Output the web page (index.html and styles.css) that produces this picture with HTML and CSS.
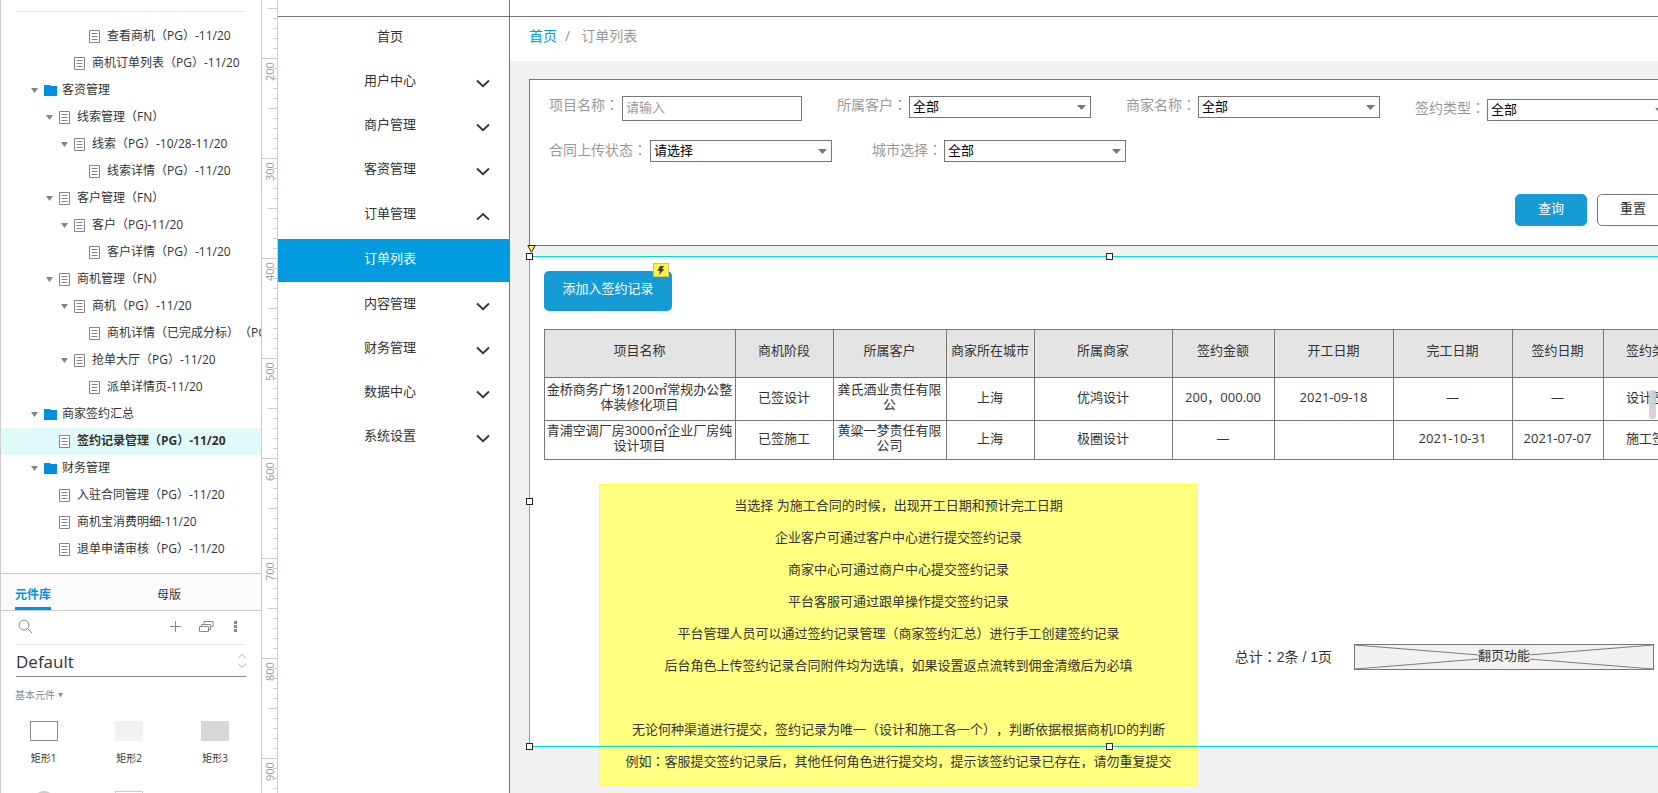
FILE: index.html
```html
<!DOCTYPE html>
<html lang="zh-CN">
<head>
<meta charset="utf-8">
<title>签约记录管理</title>
<link rel="stylesheet" href="styles.css">
</head>
<body>
<svg class="defs" aria-hidden="true">
  <symbol id="page" viewBox="0 0 11 13"><path d="M.5.5h10v12H.5z" fill="#fff" stroke="#858585"/><path d="M2.500 3.500h6M2.500 6.500h6M2.500 9.500h6" stroke="#858585" fill="none"/></symbol>
  <symbol id="folder" viewBox="0 0 13 11"><path d="M0 0h6l1 1h6v10H0z" fill="#008fe0"/></symbol>
  <symbol id="down" viewBox="0 0 14 9"><path d="M1 1.500l6 5.700 6-5.700" fill="none" stroke="#333" stroke-width="1.8"/></symbol>
  <symbol id="up" viewBox="0 0 14 9"><path d="M1 7.700l6-5.700 6 5.700" fill="none" stroke="#333" stroke-width="1.8"/></symbol>
</svg>
<div class="app">
  <aside class="side">
    <div class="side-head"></div>
    <ul class="tree">
      <li class="d3"><i></i><svg class="pg"><use href="#page"/></svg><span>查看商机（PG）-11/20</span></li>
      <li class="d2"><i></i><svg class="pg"><use href="#page"/></svg><span>商机订单列表（PG）-11/20</span></li>
      <li class="d0"><i class="open"></i><svg class="fd"><use href="#folder"/></svg><span>客资管理</span></li>
      <li class="d1"><i class="open"></i><svg class="pg"><use href="#page"/></svg><span>线索管理（FN）</span></li>
      <li class="d2"><i class="open"></i><svg class="pg"><use href="#page"/></svg><span>线索（PG）-10/28-11/20</span></li>
      <li class="d3"><i></i><svg class="pg"><use href="#page"/></svg><span>线索详情（PG）-11/20</span></li>
      <li class="d1"><i class="open"></i><svg class="pg"><use href="#page"/></svg><span>客户管理（FN）</span></li>
      <li class="d2"><i class="open"></i><svg class="pg"><use href="#page"/></svg><span>客户（PG)-11/20</span></li>
      <li class="d3"><i></i><svg class="pg"><use href="#page"/></svg><span>客户详情（PG）-11/20</span></li>
      <li class="d1"><i class="open"></i><svg class="pg"><use href="#page"/></svg><span>商机管理（FN）</span></li>
      <li class="d2"><i class="open"></i><svg class="pg"><use href="#page"/></svg><span>商机（PG）-11/20</span></li>
      <li class="d3"><i></i><svg class="pg"><use href="#page"/></svg><span>商机详情（已完成分标）（PG）</span></li>
      <li class="d2"><i class="open"></i><svg class="pg"><use href="#page"/></svg><span>抢单大厅（PG）-11/20</span></li>
      <li class="d3"><i></i><svg class="pg"><use href="#page"/></svg><span>派单详情页-11/20</span></li>
      <li class="d0"><i class="open"></i><svg class="fd"><use href="#folder"/></svg><span>商家签约汇总</span></li>
      <li class="d1 current"><i></i><svg class="pg"><use href="#page"/></svg><span>签约记录管理（PG）-11/20</span></li>
      <li class="d0"><i class="open"></i><svg class="fd"><use href="#folder"/></svg><span>财务管理</span></li>
      <li class="d1"><i></i><svg class="pg"><use href="#page"/></svg><span>入驻合同管理（PG）-11/20</span></li>
      <li class="d1"><i></i><svg class="pg"><use href="#page"/></svg><span>商机宝消费明细-11/20</span></li>
      <li class="d1"><i></i><svg class="pg"><use href="#page"/></svg><span>退单申请审核（PG）-11/20</span></li>
    </ul>
    <div class="tabs">
      <button class="tab on" type="button">元件库</button>
      <button class="tab" type="button">母版</button>
    </div>
    <div class="tools">
      <button class="search" type="button" aria-label="搜索"><svg width="15" height="15" viewBox="0 0 15 15" fill="none" stroke="#888"><circle cx="6" cy="6" r="5"/><path d="M9.600 9.600l4.400 4.400"/></svg></button>
      <button type="button" aria-label="添加"><svg width="11" height="11" viewBox="0 0 11 11" stroke="#888"><path d="M5.500 0v11M0 5.500h11"/></svg></button>
      <button type="button" aria-label="元件库列表"><svg width="15" height="12" viewBox="0 0 15 12" fill="none" stroke="#888"><path d="M.5 5.500h9v5h-9zM2.500 5.500v-2h9v5h-2M5 3.500v-3h9v5h-2.500"/></svg></button>
      <button type="button" aria-label="更多"><svg width="3" height="13" viewBox="0 0 3 13" fill="#888"><path d="M0 1h3v3H0zM0 5h3v3H0zM0 9h3v3H0z"/></svg></button>
    </div>
    <div class="lib">
      <select aria-label="元件库"><option>Default</option></select>
      <svg width="8" height="14" viewBox="0 0 8 14" fill="none" stroke="#aaa"><path d="M0 4.500l4-4 4 4M0 9.500l4 4 4-4"/></svg>
    </div>
    <div class="group">基本元件<i></i></div>
    <div class="shapes">
      <figure><div class="shape line"></div><figcaption>矩形1</figcaption></figure>
      <figure><div class="shape light"></div><figcaption>矩形2</figcaption></figure>
      <figure><div class="shape dark"></div><figcaption>矩形3</figcaption></figure>
      <figure><div class="shape round"></div></figure>
      <figure><div class="shape pale"></div></figure>
    </div>
  </aside>

  <div class="ruler">
    <span>200</span><span>300</span><span>400</span><span>500</span><span>600</span><span>700</span><span>800</span><span>900</span>
  </div>

  <main class="canvas">
    <div class="board-top"></div>
    <div class="board">
      <nav class="menu">
        <a class="home" href="#">首页</a>
        <a href="#">用户中心<svg><use href="#down"/></svg></a>
        <a href="#">商户管理<svg><use href="#down"/></svg></a>
        <a href="#">客资管理<svg><use href="#down"/></svg></a>
        <a class="parent" href="#">订单管理<svg><use href="#up"/></svg></a>
        <a class="active" href="#">订单列表</a>
        <a href="#">内容管理<svg><use href="#down"/></svg></a>
        <a href="#">财务管理<svg><use href="#down"/></svg></a>
        <a href="#">数据中心<svg><use href="#down"/></svg></a>
        <a href="#">系统设置<svg><use href="#down"/></svg></a>
      </nav>
      <section class="content">
        <div class="crumbs"><a href="#">首页</a><span>/</span><span>订单列表</span></div>
        <form class="filter">
          <div class="row">
            <div class="field"><label for="f1">项目名称<b lang="zh-TW">：</b></label><input id="f1" type="text" placeholder="请输入"></div>
            <div class="field"><label for="f2">所属客户<b lang="zh-TW">：</b></label><span class="pick"><select id="f2"><option>全部</option></select></span></div>
            <div class="field"><label for="f3">商家名称<b lang="zh-TW">：</b></label><span class="pick"><select id="f3"><option>全部</option></select></span></div>
            <div class="field low"><label for="f4">签约类型<b lang="zh-TW">：</b></label><span class="pick"><select id="f4"><option>全部</option></select></span></div>
          </div>
          <div class="row second">
            <div class="field"><label for="f5">合同上传状态<b lang="zh-TW">：</b></label><span class="pick"><select id="f5"><option>请选择</option></select></span></div>
            <div class="field"><label for="f6">城市选择<b lang="zh-TW">：</b></label><span class="pick"><select id="f6"><option>全部</option></select></span></div>
          </div>
          <div class="actions">
            <button class="primary" type="button">查询</button>
            <button type="button">重置</button>
          </div>
        </form>

        <div class="panel">
          <div class="add-wrap">
            <button class="add" type="button">添加入签约记录</button>
            <span class="bolt"><svg width="8" height="9" viewBox="0 0 8 9"><path d="M3 0h4L5 3h2.500L2 9l1-4H.5z" fill="#444"/></svg></span>
          </div>
          <table>
            <colgroup><col class="w191"><col class="w98"><col class="w113"><col class="w88"><col class="w138"><col class="w102"><col class="w119"><col class="w119"><col class="w91"><col class="w98"></colgroup>
            <thead><tr><th>项目名称</th><th>商机阶段</th><th>所属客户</th><th>商家所在城市</th><th>所属商家</th><th>签约金额</th><th>开工日期</th><th>完工日期</th><th>签约日期</th><th>签约类型</th></tr></thead>
            <tbody>
              <tr class="r1"><td>金桥商务广场1200㎡常规办公整体装修化项目</td><td>已签设计</td><td>龚氏酒业责任有限公</td><td>上海</td><td>优鸿设计</td><td>200，000.00</td><td>2021-09-18</td><td>—</td><td>—</td><td>设计签约</td></tr>
              <tr class="r2"><td>青浦空调厂房3000㎡企业厂房纯设计项目</td><td>已签施工</td><td>黄粱一梦责任有限公司</td><td>上海</td><td>极圈设计</td><td>—</td><td></td><td>2021-10-31</td><td>2021-07-07</td><td>施工签约</td></tr>
            </tbody>
          </table>
          <div class="pager">
            <span>总计<b lang="zh-TW">：</b>2条 / 1页</span>
            <div class="holder"><svg viewBox="0 0 300 26" preserveAspectRatio="none"><path d="M0 0l300 26M0 26L300 0" stroke="#777" fill="none"/></svg><span>翻页功能</span></div>
          </div>
          <div class="note">
            <p>当选择 为施工合同的时候，出现开工日期和预计完工日期</p>
            <p>企业客户可通过客户中心进行提交签约记录</p>
            <p>商家中心可通过商户中心提交签约记录</p>
            <p>平台客服可通过跟单操作提交签约记录</p>
            <p>平台管理人员可以通过签约记录管理（商家签约汇总）进行手工创建签约记录</p>
            <p>后台角色上传签约记录合同附件均为选填，如果设置返点流转到佣金清缴后为必填</p>
            <p>&nbsp;</p>
            <p>无论何种渠道进行提交，签约记录为唯一（设计和施工各一个），判断依据根据商机ID的判断</p>
            <p>例如<b lang="zh-TW">：</b>客服提交签约记录后，其他任何角色进行提交均，提示该签约记录已存在，请勿重复提交</p>
          </div>
          <div class="outline">
            <i class="h tl"></i><i class="h tm"></i><i class="h ml"></i><i class="h bl"></i><i class="h bm"></i>
            <svg class="pin" width="9" height="8" viewBox="0 0 9 8"><path d="M.8.500h7.400L4.500 7.200z" fill="#fff33a" stroke="#222"/></svg>
          </div>
        </div>
      </section>
    </div>
    <div class="thumb"></div>
  </main>
</div>
</body>
</html>
```

FILE: styles.css
```css
* { box-sizing: border-box; }
html, body { height: 100%; }
body {
  margin: 0;
  overflow: hidden;
  font: 13px/15px "Open Sans", "Noto Sans CJK SC", sans-serif;
  color: #333;
  background: #fff;
  text-spacing-trim: space-all;
}
ul, p, figure { margin: 0; padding: 0; }
a { color: inherit; text-decoration: none; }
button, input, select { font: inherit; color: inherit; margin: 0; }
b { font-weight: inherit; font-family: "Noto Sans CJK TC", sans-serif; }
.defs { display: none; }

.app { display: flex; height: 100vh; overflow: hidden; }

/* left panel */
.side {
  flex: none;
  width: 261px;
  border-left: 1px solid #ccc;
  overflow: hidden;
}
.side-head { height: 12px; margin: 0 15px; border-bottom: 1px solid #e4e4e4; }
.tree { list-style: none; padding: 11px 0 10px; font-size: 12px; }
.tree li { display: flex; align-items: center; height: 27px; white-space: nowrap; }
.tree i { flex: none; width: 7px; height: 5px; margin-right: 6px; }
.tree i.open { background: #858585; clip-path: polygon(0 0, 100% 0, 50% 100%); }
.tree svg { flex: none; }
.pg { width: 11px; height: 13px; margin-right: 7px; }
.fd { width: 13px; height: 11px; margin-right: 5px; }
.tree span { padding-bottom: 2px; }
.d0 { padding-left: 30px; }
.d1 { padding-left: 45px; }
.d2 { padding-left: 60px; }
.d3 { padding-left: 75px; }
.current { background: #e0fafa; font-weight: bold; }

.tabs {
  display: flex;
  gap: 106px;
  height: 38px;
  padding-left: 14px;
  border: solid #ccc;
  border-width: 1px 0;
  background: #fbfbfb;
}
.tab { flex: none; padding: 8px 0 0; border: 0; border-bottom: 3px solid transparent; background: none; font-size: 12px; white-space: nowrap; }
.tab.on { color: #008fe0; font-weight: bold; border-color: #008fe0; }

.tools { display: flex; align-items: center; gap: 18px; height: 34px; margin: 0 15px; padding: 0 9px 2px 2px; border-bottom: 1px solid #e4e4e4; }
.tools button { display: flex; padding: 0; border: 0; background: none; }
.tools .search { margin-right: auto; }
.tools button:last-child { margin-left: 2px; }

.lib { display: flex; align-items: center; height: 32px; margin: 0 15px; border-bottom: 1px solid #888; }
.lib select { flex: 1; appearance: none; border: 0; padding: 3px 0 0; background: none; font-size: 17px; line-height: 24px; }
.group { display: flex; align-items: center; gap: 3px; height: 36px; padding-left: 14px; font-size: 10px; color: #888; }
.group i { width: 5px; height: 5px; background: #888; clip-path: polygon(0 0, 100% 0, 50% 100%); }
.shapes { display: grid; grid-template-columns: 85px 86px 86px; grid-auto-rows: 70px; padding-top: 8px; font-size: 10px; text-align: center; }
.shape { width: 28px; height: 20px; margin: 0 auto 10px; }
.shape.line { border: 1px solid #888; }
.shape.light { background: #f2f2f2; }
.shape.dark { background: #d7d7d7; }
.shape.pale { border: 1px solid #ccc; }
.shape.round { width: 20px; border-radius: 50%; background: #ccc; }

/* ruler */
.ruler {
  flex: none;
  width: 17px;
  padding-top: 62px;
  border: solid #ccc;
  border-width: 0 1px;
  overflow: hidden;
  color: #999;
  background:
    linear-gradient(#ccc, #ccc) 0 58px / 15px 1px no-repeat,
    repeating-linear-gradient(#ccc 0 1px, transparent 1px 100px) 0 58px / 15px 100% no-repeat,
    repeating-linear-gradient(#ccc 0 1px, transparent 1px 50px) 6px 8px / 15px 100% no-repeat,
    repeating-linear-gradient(#ccc 0 1px, transparent 1px 10px) 11px 8px / 15px 100% no-repeat;
}
.ruler span { display: block; height: 100px; writing-mode: vertical-rl; transform: rotate(180deg); text-align: right; font-size: 11px; line-height: 15px; }

/* canvas */
.canvas { position: relative; flex: 1; min-width: 0; display: flex; flex-direction: column; overflow: hidden; }
.board-top { flex: none; display: flex; height: 17px; border-bottom: 1px solid #777; }
.board-top::before { content: ""; width: 231px; border-right: 1px solid #777; }
.board { flex: 1; display: flex; width: calc(100% + 32px); }
.menu { flex: none; width: 232px; border-right: 1px solid #777; }
.menu a {
  display: flex;
  align-items: center;
  justify-content: center;
  position: relative;
  height: 44px;
  padding: 0 7px 2px 0;
}
.menu svg { position: absolute; right: 19px; top: 20px; width: 14px; height: 9px; }
.menu .home { height: 42px; padding-bottom: 4px; }
.menu .parent { height: 48px; padding-bottom: 4px; }
.menu .parent svg { top: 21px; }
.menu .active { height: 43px; padding-bottom: 4px; background: #029be0; color: #fff; }

.content { flex: 1; min-width: 0; background: #f1f1f1; }
.crumbs { display: flex; height: 44px; padding: 0 0 7px 19px; align-items: center; gap: 8px; background: #fff; font-size: 14px; color: #999; }
.crumbs a { color: #029be0; }
.crumbs span:last-child { margin-left: 3px; }

.filter { margin: 18px 0 0 19px; padding: 16px 20px 19px 19px; border: 1px solid #777; background: #fff; }
.row { display: flex; gap: 35px; align-items: flex-start; }
.row.second { gap: 40px; margin-top: 19px; }
.field { flex: none; display: flex; gap: 2px; }
.field:first-child { gap: 3px; }
.field.low { align-self: flex-end; }
.field label { font-size: 14px; line-height: 16px; color: #999; }
.second label { line-height: 18px; }
.field input { width: 180px; height: 25px; padding: 0 3px 3px; border: 1px solid #777; background: #fff; }
.field input::placeholder { color: #999; opacity: 1; }
.pick { position: relative; display: block; width: 182px; height: 22px; }
.pick select { appearance: none; display: block; width: 100%; height: 100%; padding: 0 3px 2px; border: 1px solid #777; border-radius: 0; background: #fff; color: #000; }
.pick::after { content: ""; position: absolute; right: 5px; top: 9px; width: 9px; height: 5px; background: #777; clip-path: polygon(0 0, 100% 0, 50% 100%); pointer-events: none; }
.actions { display: flex; justify-content: flex-end; gap: 10px; margin-top: 32px; }
.actions button { width: 72px; height: 32px; padding: 0 0 3px; border: 1px solid #777; border-radius: 5px; background: #fff; }
.actions .primary, .add { background: #169bd5; border-color: #169bd5; color: #fff; }

.panel { position: relative; margin: 10px 0 0 19px; padding: 15px 0 77px 15px; background: #fff; }
.add-wrap { position: relative; width: 128px; }
.add { display: block; width: 128px; height: 40px; padding: 0 0 6px; border: 0; border-radius: 5px; }
.bolt { position: absolute; right: 3px; top: -8px; display: flex; align-items: center; justify-content: center; width: 16px; height: 14px; border: 1px solid #ccc86a; background: #fff33a; }

table { margin-top: 18px; border-collapse: collapse; table-layout: fixed; width: 1157px; text-align: center; }
th, td { padding: 0 1px 4px 0; border: 1px solid #777; font-weight: normal; }
th { height: 48px; padding-bottom: 7px; background: #e4e4e4; white-space: nowrap; }
.r1 td { height: 43px; }
.r2 td { height: 39px; }
.w191 { width: 191px; }
.w98 { width: 98px; }
.w113 { width: 113px; }
.w88 { width: 88px; }
.w138 { width: 138px; }
.w102 { width: 102px; }
.w119 { width: 119px; }
.w91 { width: 91px; }

.pager { display: flex; align-items: center; justify-content: flex-end; gap: 22px; margin-top: 184px; padding-right: 36px; }
.pager > span { padding-bottom: 2px; font: 14px/20px "Liberation Sans", "Noto Sans CJK SC", sans-serif; }
.holder { display: grid; place-items: center; width: 300px; height: 26px; border: 1px solid #777; background: #f1f1f1; }
.holder > * { grid-area: 1 / 1; }
.holder svg { width: 100%; height: 24px; }
.holder span { position: relative; background: #f1f1f1; margin-bottom: 3px; }

.note { position: absolute; left: 70px; top: 228px; width: 599px; padding: 4px 0 7px; border: 1px solid #ffff40; background: #ffff80; text-align: center; line-height: 32px; white-space: nowrap; }

.outline { position: absolute; inset: 0; border: 1px solid #00dcdc; pointer-events: none; }
.h { position: absolute; width: 7px; height: 7px; border: 1px solid #222; background: #fff; }
.tl { left: -4px; top: -4px; }
.tm { left: calc(50% - 4px); top: -4px; }
.ml { left: -4px; top: calc(50% - 4px); }
.bl { left: -4px; bottom: -4px; }
.bm { left: calc(50% - 4px); bottom: -4px; }
.pin { position: absolute; left: -3px; top: -12px; }

.thumb { position: absolute; right: 2px; top: 390px; width: 7px; height: 29px; border-radius: 3px; background: #ccc; opacity: .85; }
```
